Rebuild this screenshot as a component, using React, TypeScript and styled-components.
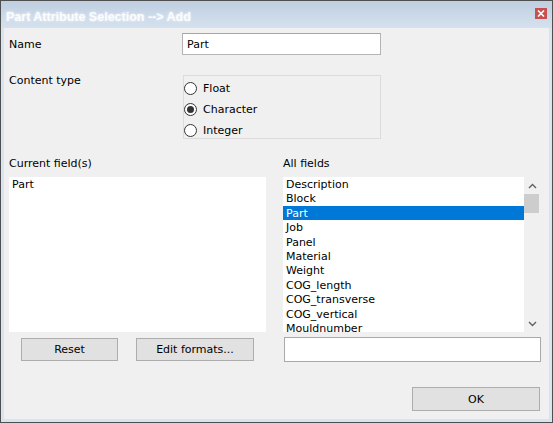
import styled, { createGlobalStyle } from 'styled-components';

const GlobalStyle = createGlobalStyle`
  html, body {
    margin: 0;
    padding: 0;
    background: #ffffff;
  }
  * {
    box-sizing: border-box;
  }
`;

const currentFields = ['Part'];

const allFields = [
  'Description',
  'Block',
  'Part',
  'Job',
  'Panel',
  'Material',
  'Weight',
  'COG_length',
  'COG_transverse',
  'COG_vertical',
  'Mouldnumber',
];

const contentTypes = ['Float', 'Character', 'Integer'];

export default function App() {
  const selectedField = 'Part';
  const selectedType = 'Character';

  return (
    <>
      <GlobalStyle />
      <Window>
        <TitleBar>
          <Title>Part Attribute Selection --&gt; Add</Title>
          <CloseButton>
            <svg width="8" height="7" viewBox="0 0 8 7">
              <path d="M1 0.5 L7 6.5 M7 0.5 L1 6.5" stroke="#fff" strokeWidth="1.6" />
            </svg>
          </CloseButton>
        </TitleBar>
        <Content>
          <FormRow>
            <Label>Name</Label>
            <TextInput value="Part" readOnly />
          </FormRow>
          <FormRow $top={20}>
            <Label $alignTop>Content type</Label>
            <GroupBox>
              {contentTypes.map((type) => (
                <RadioRow key={type}>
                  <RadioCircle>{type === selectedType && <RadioDot />}</RadioCircle>
                  {type}
                </RadioRow>
              ))}
            </GroupBox>
          </FormRow>
          <FieldsGrid>
            <ColumnLabel>Current field(s)</ColumnLabel>
            <ColumnLabel>All fields</ColumnLabel>
            <ListBox>
              <ListItems>
                {currentFields.map((f) => (
                  <ListItem key={f}>{f}</ListItem>
                ))}
              </ListItems>
            </ListBox>
            <ListBox>
              <ListItems>
                {allFields.map((f) => (
                  <ListItem key={f} $selected={f === selectedField}>
                    {f}
                  </ListItem>
                ))}
              </ListItems>
              <ScrollBar>
                <ScrollArrow>
                  <svg width="9" height="6" viewBox="0 0 9 6">
                    <path d="M1 5 L4.5 1.5 L8 5" stroke="#606060" strokeWidth="1.4" fill="none" />
                  </svg>
                </ScrollArrow>
                <ScrollTrack>
                  <ScrollThumb />
                </ScrollTrack>
                <ScrollArrow>
                  <svg width="9" height="6" viewBox="0 0 9 6">
                    <path d="M1 1 L4.5 4.5 L8 1" stroke="#606060" strokeWidth="1.4" fill="none" />
                  </svg>
                </ScrollArrow>
              </ScrollBar>
            </ListBox>
            <ButtonRow>
              <Button $width={97}>Reset</Button>
              <Button $width={118}>Edit formats...</Button>
            </ButtonRow>
            <ButtonRow>
              <FilterInput readOnly />
            </ButtonRow>
          </FieldsGrid>
          <Footer>
            <Button $width={128} $height={24}>OK</Button>
          </Footer>
        </Content>
      </Window>
    </>
  );
}

const Window = styled.div`
  width: 553px;
  height: 423px;
  display: flex;
  flex-direction: column;
  border: 1px solid #4f4f4f;
  background: #d9e4f1;
  font-family: 'DejaVu Sans', Verdana, sans-serif;
  font-size: 11px;
  color: #000;
`;

const TitleBar = styled.div`
  height: 27px;
  flex-shrink: 0;
  display: flex;
  align-items: center;
  justify-content: space-between;
  padding: 0 5px 0 5px;
  background: linear-gradient(#bfcfe1, #d5e1ee);
`;

const Title = styled.span`
  font-family: 'Liberation Sans', Arial, sans-serif;
  font-weight: bold;
  font-size: 12.5px;
  color: #fbfcfe;
  text-shadow: 0 0 3px rgba(255, 255, 255, 0.9);
  padding-top: 5px;
`;

const CloseButton = styled.div`
  width: 12px;
  height: 11px;
  margin-top: -3px;
  background: #c84f4f;
  display: flex;
  align-items: center;
  justify-content: center;
`;

const Content = styled.div`
  flex: 1;
  margin: 0 3px 3px 3px;
  background: #f0f0f0;
  padding: 5px 8px 0 5px;
  display: flex;
  flex-direction: column;
`;

const FormRow = styled.div<{ $top?: number }>`
  display: grid;
  grid-template-columns: 173px 199px;
  align-items: center;
  margin-top: ${({ $top }) => $top ?? 0}px;
`;

const Label = styled.span<{ $alignTop?: boolean }>`
  align-self: ${({ $alignTop }) => ($alignTop ? 'start' : 'center')};
  margin-top: ${({ $alignTop }) => ($alignTop ? '-1px' : '1px')};
  line-height: 14px;
`;

const TextInput = styled.input`
  height: 22px;
  border: 1px solid #b4b4b4;
  border-top-color: #a6a6a6;
  background: #fff;
  font: inherit;
  padding: 1px 4px 0;
  outline: none;
`;

const GroupBox = styled.div`
  height: 64px;
  margin-left: 1px;
  border: 1px solid #dcdcdc;
  padding-top: 2px;
  display: flex;
  flex-direction: column;
`;

const RadioRow = styled.div`
  height: 21px;
  flex-shrink: 0;
  display: flex;
  align-items: center;
  gap: 6px;
`;

const RadioCircle = styled.span`
  width: 13px;
  height: 13px;
  border: 1px solid #333;
  border-radius: 50%;
  background: #fff;
  display: flex;
  align-items: center;
  justify-content: center;
`;

const RadioDot = styled.span`
  width: 7px;
  height: 7px;
  border-radius: 50%;
  background: #333;
`;

const FieldsGrid = styled.div`
  display: grid;
  grid-template-columns: 257px 258px;
  grid-template-rows: 21px 155px 27px;
  column-gap: 17px;
  margin-top: 17px;
`;

const ColumnLabel = styled.span`
  line-height: 14px;
  padding-top: 1px;
`;

const ListBox = styled.div`
  display: flex;
  background: #fff;
  overflow: hidden;
`;

const ListItems = styled.div`
  flex: 1;
  display: flex;
  flex-direction: column;
`;

const ListItem = styled.div<{ $selected?: boolean }>`
  height: 14.4px;
  line-height: 13.4px;
  padding-top: 1px;
  flex-shrink: 0;
  padding-left: 3px;
  white-space: nowrap;
  background: ${({ $selected }) => ($selected ? '#0078d7' : 'transparent')};
  color: ${({ $selected }) => ($selected ? '#fff' : '#000')};
`;

const ScrollBar = styled.div`
  width: 17px;
  background: #f0f0f0;
  display: flex;
  flex-direction: column;
`;

const ScrollArrow = styled.div`
  height: 17px;
  display: flex;
  align-items: center;
  justify-content: center;
`;

const ScrollTrack = styled.div`
  flex: 1;
`;

const ScrollThumb = styled.div`
  width: 15px;
  height: 19px;
  background: #cdcdcd;
`;

const ButtonRow = styled.div`
  display: flex;
  align-items: center;
  gap: 18px;
  padding-left: 12px;
  margin-top: 7px;

  &:last-child {
    padding-left: 1px;
  }
`;

const Button = styled.button<{ $width: number; $height?: number }>`
  width: ${({ $width }) => $width}px;
  height: ${({ $height }) => $height ?? 23}px;
  border: 1px solid #adadad;
  background: #e1e1e1;
  font: inherit;
  color: #000;
  padding: 0;
`;

const FilterInput = styled.input`
  width: 257px;
  height: 25px;
  border: 1px solid #a9a9a9;
  background: #fff;
  font: inherit;
  outline: none;
`;

const Footer = styled.div`
  display: flex;
  justify-content: flex-end;
  padding-right: 1px;
  margin-top: 28px;
`;
